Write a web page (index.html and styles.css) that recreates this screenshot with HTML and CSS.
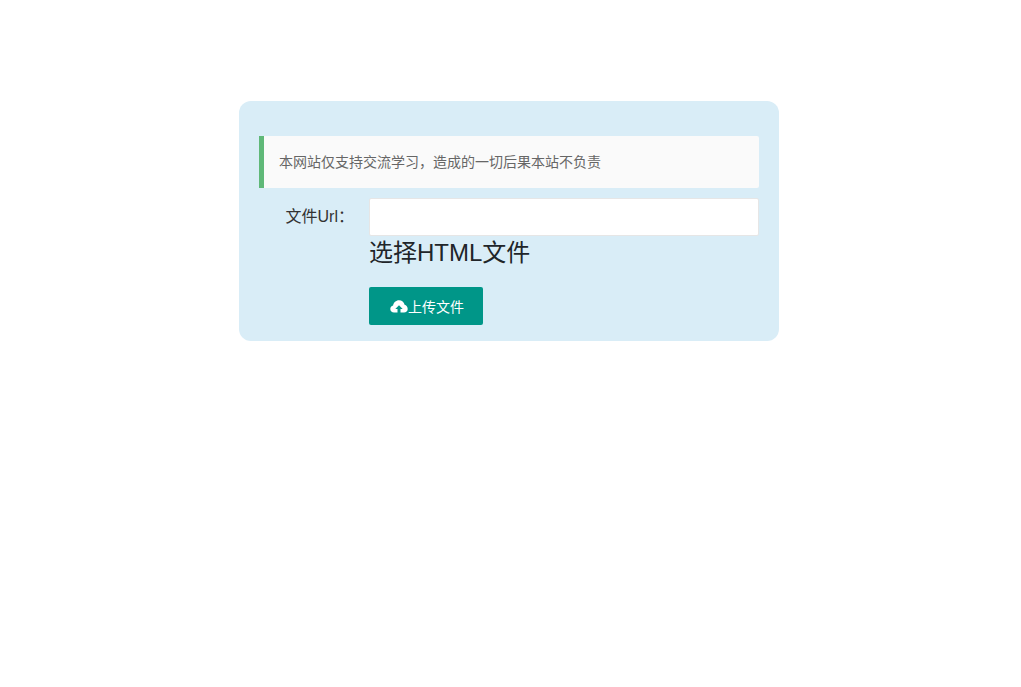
FILE: index.html
```html
<!DOCTYPE html>
<html lang="zh-CN">
<head>
    <meta charset="UTF-8">
    <meta name="viewport" content="width=device-width, initial-scale=1.0">
    <title>上传文件</title>
    <link rel="stylesheet" href="styles.css">
</head>
<body>
<div class="page">
    <div class="panel">
        <blockquote class="notice">本网站仅支持交流学习，造成的一切后果本站不负责</blockquote>
        <form class="upload-form">
            <label class="form-label" for="file-url">文件Url：</label>
            <div class="form-field">
                <input class="form-input" type="text" id="file-url">
                <h3 class="file-title">选择HTML文件</h3>
                <button class="upload-btn" type="button">
                    <svg class="cloud-icon" viewBox="0 0 18 14" width="18" height="14" aria-hidden="true">
                        <path d="M4 13.500C1.900 13.500 .3 12 .3 10 .3 8.300 1.400 6.900 3.100 6.500 3.500 3.500 6 1.200 9 1.200c2.800 0 5.100 1.900 5.600 4.500 1.800.5 3.100 2.200 3.100 4.200 0 2.100-1.600 3.600-3.700 3.600H10.500V10H12.700L9 6.200 5.300 10H7.500V13.500Z"/>
                    </svg>上传文件
                </button>
            </div>
        </form>
    </div>
</div>
</body>
</html>
```

FILE: styles.css
```css
body {
    margin: 0;
    background: #fff;
    color: #333;
    font-family: "Liberation Sans", "Noto Sans CJK SC", sans-serif;
    font-size: 14px;
}
.page {
    padding: 101px 3px 0 0;
}
.panel {
    width: 540px;
    box-sizing: border-box;
    margin: 0 auto;
    padding: 35px 20px 16px;
    background: #d9edf7;
    border-radius: 12px;
}
.notice {
    margin: 0 0 10px;
    padding: 15px;
    height: 52px;
    box-sizing: border-box;
    line-height: 22px;
    background: #fafafa;
    border-left: 5px solid #5fb878;
    border-radius: 0 2px 2px 0;
    color: #666;
}
.upload-form {
    display: flex;
}
.form-label {
    width: 80px;
    padding: 9px 15px;
    font-size: 16px;
    line-height: 20px;
    text-align: right;
    flex-shrink: 0;
}
.form-field {
    flex: 1;
}
.form-input {
    display: block;
    width: 100%;
    height: 38px;
    box-sizing: border-box;
    padding-left: 10px;
    background: #fff;
    border: 1px solid #e6e6e6;
    border-radius: 2px;
    outline: none;
}
.file-title {
    margin: 0 0 17px;
    font-size: 24px;
    font-weight: 400;
    line-height: 34px;
    color: #212529;
}
.upload-btn {
    display: flex;
    align-items: center;
    justify-content: center;
    width: 114px;
    height: 38px;
    padding: 0 0 0 2px;
    background: #009688;
    border: none;
    border-radius: 2px;
    color: #fff;
    font-family: inherit;
    font-size: 14px;
    cursor: pointer;
}
.cloud-icon {
    fill: #fff;
}
```
